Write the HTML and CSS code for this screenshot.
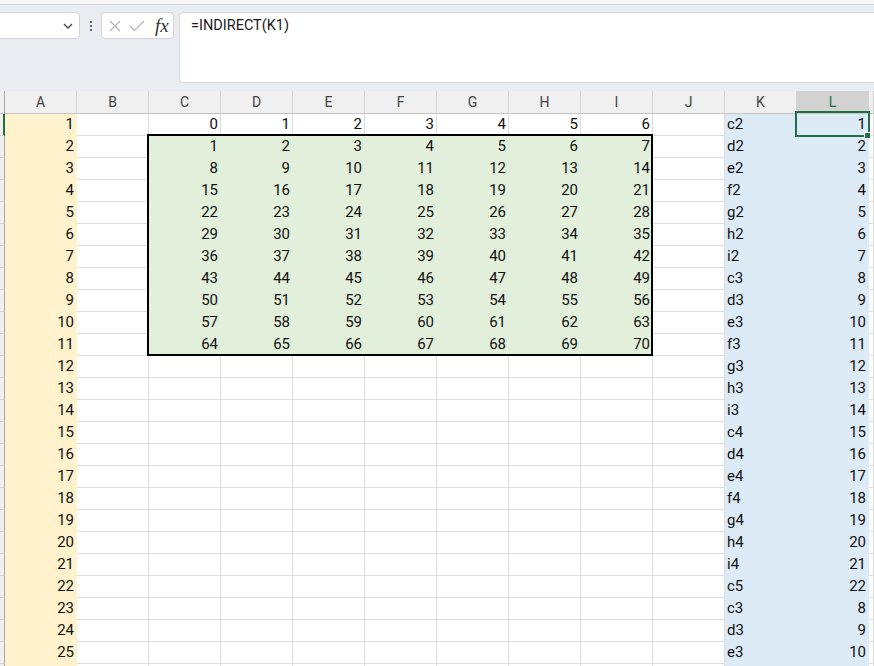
FILE: index.html
```html
<!DOCTYPE html>
<html lang="en">
<head>
<meta charset="utf-8">
<title>Sheet</title>
<link rel="stylesheet" href="styles.css">
</head>
<body>
<div class="topstrip"></div>
<div class="toolbar">
  <div class="namebox">
    <svg class="chev" width="10" height="6" viewBox="0 0 10 6"><path d="M1 1 L5 5 L9 1" fill="none" stroke="#444" stroke-width="1.3"/></svg>
  </div>
  <div class="dots"><span></span><span></span><span></span></div>
  <div class="funcbox">
    <svg class="ico" width="14" height="14" viewBox="0 0 14 14"><path d="M2 2 L12 12 M12 2 L2 12" stroke="#b4b4b4" stroke-width="1.2" fill="none"/></svg>
    <svg class="ico" width="16" height="12" viewBox="0 0 16 12"><path d="M1 6 L5.5 10.5 L15 1" stroke="#b4b4b4" stroke-width="1.2" fill="none"/></svg>
    <span class="fx">fx</span>
  </div>
  <div class="formula">=INDIRECT(K1)</div>
</div>
<div class="sheet">
  <div class="h corner"></div><div class="h">A</div><div class="h">B</div><div class="h">C</div><div class="h">D</div><div class="h">E</div><div class="h">F</div><div class="h">G</div><div class="h">H</div><div class="h">I</div><div class="h">J</div><div class="h">K</div><div class="h hs">L</div><div class="h"></div>

  <div class="r s"></div><div class="c n y">1</div><div class="c"></div><div class="c n">0</div><div class="c n">1</div><div class="c n">2</div><div class="c n">3</div><div class="c n">4</div><div class="c n">5</div><div class="c n">6</div><div class="c"></div><div class="c b">c2</div><div class="c n b">1</div><div class="c"></div>
  <div class="r"></div><div class="c n y">2</div><div class="c"></div><div class="c n g">1</div><div class="c n g">2</div><div class="c n g">3</div><div class="c n g">4</div><div class="c n g">5</div><div class="c n g">6</div><div class="c n g">7</div><div class="c"></div><div class="c b">d2</div><div class="c n b">2</div><div class="c"></div>
  <div class="r"></div><div class="c n y">3</div><div class="c"></div><div class="c n g">8</div><div class="c n g">9</div><div class="c n g">10</div><div class="c n g">11</div><div class="c n g">12</div><div class="c n g">13</div><div class="c n g">14</div><div class="c"></div><div class="c b">e2</div><div class="c n b">3</div><div class="c"></div>
  <div class="r"></div><div class="c n y">4</div><div class="c"></div><div class="c n g">15</div><div class="c n g">16</div><div class="c n g">17</div><div class="c n g">18</div><div class="c n g">19</div><div class="c n g">20</div><div class="c n g">21</div><div class="c"></div><div class="c b">f2</div><div class="c n b">4</div><div class="c"></div>
  <div class="r"></div><div class="c n y">5</div><div class="c"></div><div class="c n g">22</div><div class="c n g">23</div><div class="c n g">24</div><div class="c n g">25</div><div class="c n g">26</div><div class="c n g">27</div><div class="c n g">28</div><div class="c"></div><div class="c b">g2</div><div class="c n b">5</div><div class="c"></div>
  <div class="r"></div><div class="c n y">6</div><div class="c"></div><div class="c n g">29</div><div class="c n g">30</div><div class="c n g">31</div><div class="c n g">32</div><div class="c n g">33</div><div class="c n g">34</div><div class="c n g">35</div><div class="c"></div><div class="c b">h2</div><div class="c n b">6</div><div class="c"></div>
  <div class="r"></div><div class="c n y">7</div><div class="c"></div><div class="c n g">36</div><div class="c n g">37</div><div class="c n g">38</div><div class="c n g">39</div><div class="c n g">40</div><div class="c n g">41</div><div class="c n g">42</div><div class="c"></div><div class="c b">i2</div><div class="c n b">7</div><div class="c"></div>
  <div class="r"></div><div class="c n y">8</div><div class="c"></div><div class="c n g">43</div><div class="c n g">44</div><div class="c n g">45</div><div class="c n g">46</div><div class="c n g">47</div><div class="c n g">48</div><div class="c n g">49</div><div class="c"></div><div class="c b">c3</div><div class="c n b">8</div><div class="c"></div>
  <div class="r"></div><div class="c n y">9</div><div class="c"></div><div class="c n g">50</div><div class="c n g">51</div><div class="c n g">52</div><div class="c n g">53</div><div class="c n g">54</div><div class="c n g">55</div><div class="c n g">56</div><div class="c"></div><div class="c b">d3</div><div class="c n b">9</div><div class="c"></div>
  <div class="r"></div><div class="c n y">10</div><div class="c"></div><div class="c n g">57</div><div class="c n g">58</div><div class="c n g">59</div><div class="c n g">60</div><div class="c n g">61</div><div class="c n g">62</div><div class="c n g">63</div><div class="c"></div><div class="c b">e3</div><div class="c n b">10</div><div class="c"></div>
  <div class="r"></div><div class="c n y">11</div><div class="c"></div><div class="c n g">64</div><div class="c n g">65</div><div class="c n g">66</div><div class="c n g">67</div><div class="c n g">68</div><div class="c n g">69</div><div class="c n g">70</div><div class="c"></div><div class="c b">f3</div><div class="c n b">11</div><div class="c"></div>
  <div class="r"></div><div class="c n y">12</div><div class="c"></div><div class="c"></div><div class="c"></div><div class="c"></div><div class="c"></div><div class="c"></div><div class="c"></div><div class="c"></div><div class="c"></div><div class="c b">g3</div><div class="c n b">12</div><div class="c"></div>
  <div class="r"></div><div class="c n y">13</div><div class="c"></div><div class="c"></div><div class="c"></div><div class="c"></div><div class="c"></div><div class="c"></div><div class="c"></div><div class="c"></div><div class="c"></div><div class="c b">h3</div><div class="c n b">13</div><div class="c"></div>
  <div class="r"></div><div class="c n y">14</div><div class="c"></div><div class="c"></div><div class="c"></div><div class="c"></div><div class="c"></div><div class="c"></div><div class="c"></div><div class="c"></div><div class="c"></div><div class="c b">i3</div><div class="c n b">14</div><div class="c"></div>
  <div class="r"></div><div class="c n y">15</div><div class="c"></div><div class="c"></div><div class="c"></div><div class="c"></div><div class="c"></div><div class="c"></div><div class="c"></div><div class="c"></div><div class="c"></div><div class="c b">c4</div><div class="c n b">15</div><div class="c"></div>
  <div class="r"></div><div class="c n y">16</div><div class="c"></div><div class="c"></div><div class="c"></div><div class="c"></div><div class="c"></div><div class="c"></div><div class="c"></div><div class="c"></div><div class="c"></div><div class="c b">d4</div><div class="c n b">16</div><div class="c"></div>
  <div class="r"></div><div class="c n y">17</div><div class="c"></div><div class="c"></div><div class="c"></div><div class="c"></div><div class="c"></div><div class="c"></div><div class="c"></div><div class="c"></div><div class="c"></div><div class="c b">e4</div><div class="c n b">17</div><div class="c"></div>
  <div class="r"></div><div class="c n y">18</div><div class="c"></div><div class="c"></div><div class="c"></div><div class="c"></div><div class="c"></div><div class="c"></div><div class="c"></div><div class="c"></div><div class="c"></div><div class="c b">f4</div><div class="c n b">18</div><div class="c"></div>
  <div class="r"></div><div class="c n y">19</div><div class="c"></div><div class="c"></div><div class="c"></div><div class="c"></div><div class="c"></div><div class="c"></div><div class="c"></div><div class="c"></div><div class="c"></div><div class="c b">g4</div><div class="c n b">19</div><div class="c"></div>
  <div class="r"></div><div class="c n y">20</div><div class="c"></div><div class="c"></div><div class="c"></div><div class="c"></div><div class="c"></div><div class="c"></div><div class="c"></div><div class="c"></div><div class="c"></div><div class="c b">h4</div><div class="c n b">20</div><div class="c"></div>
  <div class="r"></div><div class="c n y">21</div><div class="c"></div><div class="c"></div><div class="c"></div><div class="c"></div><div class="c"></div><div class="c"></div><div class="c"></div><div class="c"></div><div class="c"></div><div class="c b">i4</div><div class="c n b">21</div><div class="c"></div>
  <div class="r"></div><div class="c n y">22</div><div class="c"></div><div class="c"></div><div class="c"></div><div class="c"></div><div class="c"></div><div class="c"></div><div class="c"></div><div class="c"></div><div class="c"></div><div class="c b">c5</div><div class="c n b">22</div><div class="c"></div>
  <div class="r"></div><div class="c n y">23</div><div class="c"></div><div class="c"></div><div class="c"></div><div class="c"></div><div class="c"></div><div class="c"></div><div class="c"></div><div class="c"></div><div class="c"></div><div class="c b">c3</div><div class="c n b">8</div><div class="c"></div>
  <div class="r"></div><div class="c n y">24</div><div class="c"></div><div class="c"></div><div class="c"></div><div class="c"></div><div class="c"></div><div class="c"></div><div class="c"></div><div class="c"></div><div class="c"></div><div class="c b">d3</div><div class="c n b">9</div><div class="c"></div>
  <div class="r"></div><div class="c n y">25</div><div class="c"></div><div class="c"></div><div class="c"></div><div class="c"></div><div class="c"></div><div class="c"></div><div class="c"></div><div class="c"></div><div class="c"></div><div class="c b">e3</div><div class="c n b">10</div><div class="c"></div>
  <div class="r"></div><div class="c y"></div><div class="c"></div><div class="c"></div><div class="c"></div><div class="c"></div><div class="c"></div><div class="c"></div><div class="c"></div><div class="c"></div><div class="c"></div><div class="c b"></div><div class="c b"></div><div class="c"></div>

  <div class="blk"></div>
  <div class="sel"></div>
  <div class="handle"></div>
</div>
</body>
</html>
```

FILE: styles.css
```css
* { box-sizing: border-box; margin: 0; padding: 0; }
html, body { width: 874px; height: 666px; overflow: hidden; background: #fff; }
body { font-family: Roboto, "Liberation Sans", sans-serif; color: #111; }

.topstrip { height: 5px; background: #f7f7f7; border-bottom: 1px solid #d2d4d7; }

.toolbar {
  height: 86px;
  background: #e9ecf0;
  display: flex;
  align-items: flex-start;
  padding-top: 7px;
}
.namebox {
  margin-left: -10px;
  width: 90px;
  height: 27px;
  background: #fff;
  border: 1px solid #d3d6da;
  border-radius: 4px;
  display: flex;
  align-items: center;
  justify-content: flex-end;
  padding-right: 6px;
}
.dots {
  width: 21px;
  height: 27px;
  display: flex;
  flex-direction: column;
  align-items: center;
  justify-content: center;
  gap: 2px;
}
.dots span { width: 2px; height: 2px; background: #333; border-radius: 1px; }
.funcbox {
  width: 73px;
  height: 27px;
  background: #fff;
  border: 1px solid #d3d6da;
  border-radius: 4px;
  display: flex;
  align-items: center;
  padding-left: 6px;
  gap: 7px;
}
.fx {
  font-family: "Liberation Serif", "DejaVu Serif", serif;
  font-style: italic;
  font-size: 19px;
  color: #333;
  margin-left: 3px;
  line-height: 20px;
}
.formula {
  flex: 1;
  margin-left: 5px;
  margin-right: -10px;
  height: 71px;
  background: #fff;
  border: 1px solid #d3d6da;
  border-radius: 4px;
  padding: 3px 11px;
  font-size: 14.5px;
  line-height: 20px;
  color: #1a1a1a;
}

.sheet {
  position: relative;
  display: grid;
  grid-template-columns: 5px repeat(12, 72px) 1fr;
  grid-template-rows: 23px;
  grid-auto-rows: 22px;
}
.h {
  background: #f0f0f0;
  border-right: 1px solid #d4d4d4;
  border-bottom: 1px solid #c4c4c4;
  font-size: 14px;
  color: #444;
  display: flex;
  align-items: center;
  justify-content: center;
}
.h.corner { border-right-color: #a9a9a9; }
.h.hs { background: #d2d2d2; color: #1e7145; }

.r {
  background: #f0f0f0;
  border-right: 1px solid #a9a9a9;
  border-bottom: 1px solid #d4d4d4;
}
.r.s { border-right: 2px solid #1e7145; }

.c {
  border-right: 1px solid #dedede;
  border-bottom: 1px solid #dedede;
  font-size: 15px;
  line-height: 21px;
  padding: 0 2px;
  white-space: nowrap;
  overflow: hidden;
}
.n { text-align: right; }
.y { background: #fff2cc; border-color: #fff2cc; }
.g { background: #e2efda; border-color: #e2efda; }
.b { background: #ddebf7; border-color: #ddebf7; }

.blk {
  position: absolute;
  left: 147px;
  top: 43px;
  width: 506px;
  height: 222px;
  border: 2px solid #000;
}
.sel {
  position: absolute;
  left: 795px;
  top: 20px;
  width: 75px;
  height: 26px;
  border: 2px solid #1e7145;
}
.handle {
  position: absolute;
  left: 864px;
  top: 41px;
  width: 7px;
  height: 7px;
  background: #1e7145;
  border: 1px solid #fff;
}
```
